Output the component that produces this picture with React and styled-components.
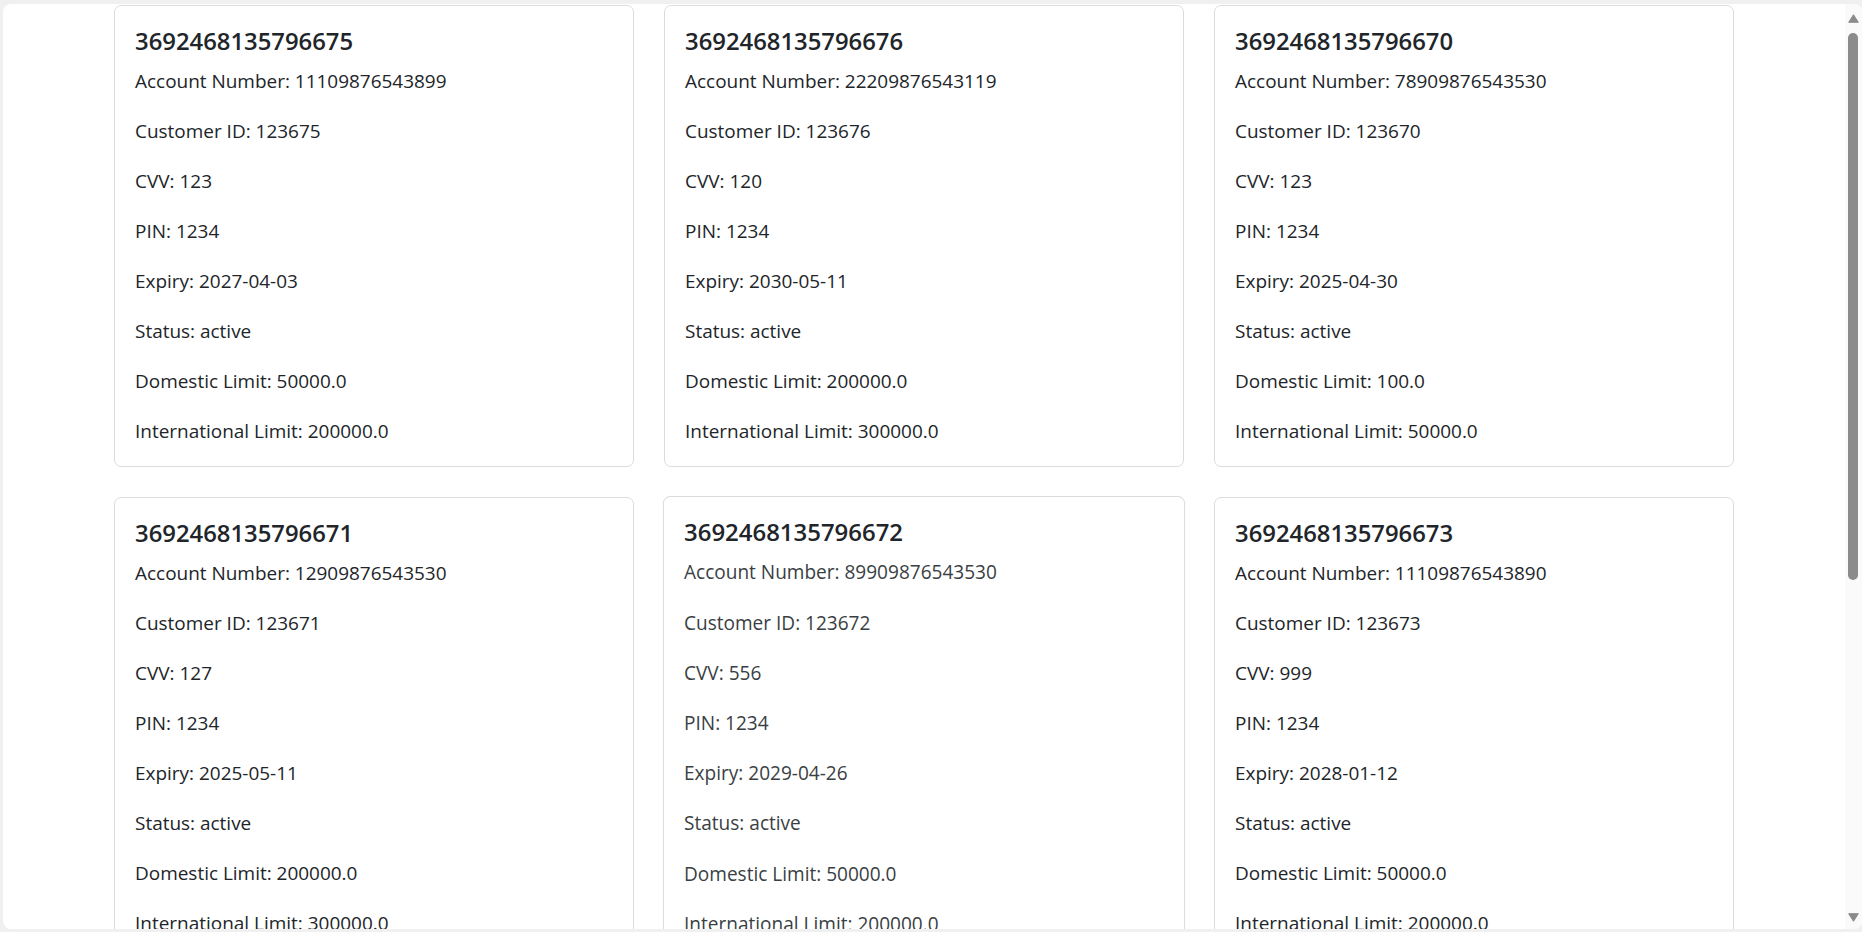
import React from "react";
import styled, { createGlobalStyle } from "styled-components";

const GlobalStyle = createGlobalStyle`
  html, body {
    margin: 0;
    padding: 0;
    height: 100%;
    overflow: hidden;
    background: #f0f0f0;
  }
  #root { height: 100%; }
  * { box-sizing: border-box; }
`;

const Frame = styled.div`
  height: 100vh;
  display: flex;
  padding: 4px 0 3px 3px;
  background: #f0f0f0;
`;

const Panel = styled.div`
  flex: 1;
  display: flex;
  min-width: 0;
  background: #ffffff;
  border-radius: 8px;
  overflow: hidden;
`;

const Viewport = styled.main`
  flex: 1;
  min-width: 0;
  overflow: hidden;
  font-family: "Open Sans", "Noto Sans", sans-serif;
  color: #212529;
`;

const ScrollBar = styled.div`
  width: 17px;
  flex: none;
  display: flex;
  flex-direction: column;
  background: #fafafa;
`;

const ArrowButton = styled.div`
  height: ${(p) => p.$h}px;
  flex: none;
  display: flex;
  justify-content: center;
  align-items: ${(p) => (p.$down ? "flex-start" : "flex-end")};
  padding: ${(p) => (p.$down ? "8px 0 0 0" : "0 0 8px 0")};
`;

const Thumb = styled.div`
  height: 547px;
  flex: none;
  margin: 2px 4px 0 3px;
  border-radius: 5px;
  background: #8b8b8b;
`;

const TrackRest = styled.div`
  flex: 1;
`;

const Container = styled.div`
  max-width: 1650px;
  margin: 0 auto;
  padding: 1px 15px 0;
`;

const Grid = styled.div`
  display: grid;
  grid-template-columns: repeat(3, 1fr);
  gap: 30px 30px;
`;

const Card = styled.article`
  border: 1px solid #dcdcdc;
  border-radius: 7px;
  background: #ffffff;
  padding: 20px;
  transform: ${(p) => (p.$hovered ? "scale(1.004)" : "none")};
`;

const CardTitle = styled.h5`
  margin: 0 0 10px;
  font-size: 23.85px;
  font-weight: 600;
  line-height: 30px;
  color: #212529;
`;

const Field = styled.p`
  margin: 0 0 20px;
  font-size: 18.97px;
  line-height: 30px;
  color: ${(p) => (p.$muted ? "#3a3f44" : "#212529")};

  &:last-child {
    margin-bottom: 0;
  }
`;

const Arrow = ({ down }) => (
  <svg width="11" height="9" viewBox="0 0 11 9" aria-hidden="true">
    <path
      d={down ? "M0.7 0.7 H10.3 L5.5 8.3 Z" : "M5.5 0.7 L10.3 8.3 H0.7 Z"}
      fill="#8b8b8b"
      stroke="#8b8b8b"
      strokeWidth="1"
      strokeLinejoin="round"
    />
  </svg>
);

const cards = [
  { no: "3692468135796675", acct: "11109876543899", cust: "123675", cvv: "123", pin: "1234", exp: "2027-04-03", status: "active", dom: "50000.0", intl: "200000.0" },
  { no: "3692468135796676", acct: "22209876543119", cust: "123676", cvv: "120", pin: "1234", exp: "2030-05-11", status: "active", dom: "200000.0", intl: "300000.0" },
  { no: "3692468135796670", acct: "78909876543530", cust: "123670", cvv: "123", pin: "1234", exp: "2025-04-30", status: "active", dom: "100.0", intl: "50000.0" },
  { no: "3692468135796671", acct: "12909876543530", cust: "123671", cvv: "127", pin: "1234", exp: "2025-05-11", status: "active", dom: "200000.0", intl: "300000.0" },
  { no: "3692468135796672", acct: "89909876543530", cust: "123672", cvv: "556", pin: "1234", exp: "2029-04-26", status: "active", dom: "50000.0", intl: "200000.0", hovered: true },
  { no: "3692468135796673", acct: "11109876543890", cust: "123673", cvv: "999", pin: "1234", exp: "2028-01-12", status: "active", dom: "50000.0", intl: "200000.0" },
];

export default function App() {
  return (
    <>
      <GlobalStyle />
      <Frame>
        <Panel>
          <Viewport>
            <Container>
              <Grid>
                {cards.map((c) => (
                  <Card key={c.no} $hovered={c.hovered}>
                    <CardTitle>{c.no}</CardTitle>
                    <Field $muted={c.hovered}>Account Number: {c.acct}</Field>
                    <Field $muted={c.hovered}>Customer ID: {c.cust}</Field>
                    <Field $muted={c.hovered}>CVV: {c.cvv}</Field>
                    <Field $muted={c.hovered}>PIN: {c.pin}</Field>
                    <Field $muted={c.hovered}>Expiry: {c.exp}</Field>
                    <Field $muted={c.hovered}>Status: {c.status}</Field>
                    <Field $muted={c.hovered}>Domestic Limit: {c.dom}</Field>
                    <Field $muted={c.hovered}>International Limit: {c.intl}</Field>
                  </Card>
                ))}
              </Grid>
            </Container>
          </Viewport>
          <ScrollBar aria-hidden="true">
            <ArrowButton $h={27}>
              <Arrow />
            </ArrowButton>
            <Thumb />
            <TrackRest />
            <ArrowButton $h={24} $down>
              <Arrow down />
            </ArrowButton>
          </ScrollBar>
        </Panel>
      </Frame>
    </>
  );
}
